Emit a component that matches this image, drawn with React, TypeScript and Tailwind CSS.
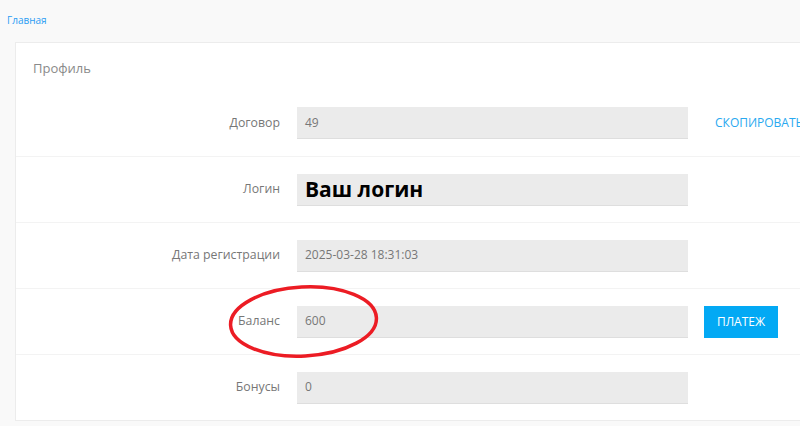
import React from "react";

type Row = {
  label: string;
  value: string;
  bold?: boolean;
  action?: "copy" | "pay";
};

const rows: Row[] = [
  { label: "Договор", value: "49", action: "copy" },
  { label: "Логин", value: "Ваш логин", bold: true },
  { label: "Дата регистрации", value: "2025-03-28 18:31:03" },
  { label: "Баланс", value: "600", action: "pay" },
  { label: "Бонусы", value: "0" },
];

const App: React.FC = () => {
  return (
    <div
      className="relative min-h-[426px] bg-[#f9f9f9] overflow-hidden"
      style={{ fontFamily: "'Open Sans', 'Liberation Sans', sans-serif" }}
    >
      <div className="pl-[7px] pt-[13px] h-[42px] text-[10px] text-[#2a9df4]">
        Главная
      </div>
      <div className="ml-[15px] w-[820px] bg-white border border-[#ececec]">
        <div className="h-[47px] pl-[17px] pt-[16px] text-[13px] text-[#8a8a8a]">
          Профиль
        </div>
        {rows.map((row, i) => (
          <div
            key={row.label}
            className={
              "flex items-center h-[66px] " +
              (i > 0 ? "border-t border-[#f3f3f3]" : "")
            }
          >
            <div className="w-[264px] text-right text-[12.3px] text-[#777]">
              {row.label}
            </div>
            <div className="ml-[17px] w-[391px] h-[32px] bg-[#ebebeb] border-b border-[#dedede] flex items-center pl-[8px]">
              {row.bold ? (
                <span className="text-[21px] font-bold text-black leading-none">
                  {row.value}
                </span>
              ) : (
                <span className="text-[12px] text-[#777]">{row.value}</span>
              )}
            </div>
            {row.action === "copy" && (
              <div className="ml-[27px] text-[12px] text-[#29a9f0] uppercase whitespace-nowrap">
                Скопировать
              </div>
            )}
            {row.action === "pay" && (
              <button className="ml-[16px] w-[74px] h-[32px] bg-[#03a9f4] text-white text-[12px] uppercase">
                Платеж
              </button>
            )}
          </div>
        ))}
      </div>
      <svg
        className="absolute left-[224px] top-[281px]"
        width="160"
        height="82"
        viewBox="0 0 160 82"
      >
        <ellipse
          cx="79.5"
          cy="40.5"
          rx="73"
          ry="34.5"
          fill="none"
          stroke="#ec1c24"
          strokeWidth="3.5"
          transform="rotate(-3 79.5 40.5)"
        />
      </svg>
    </div>
  );
};

export default App;
